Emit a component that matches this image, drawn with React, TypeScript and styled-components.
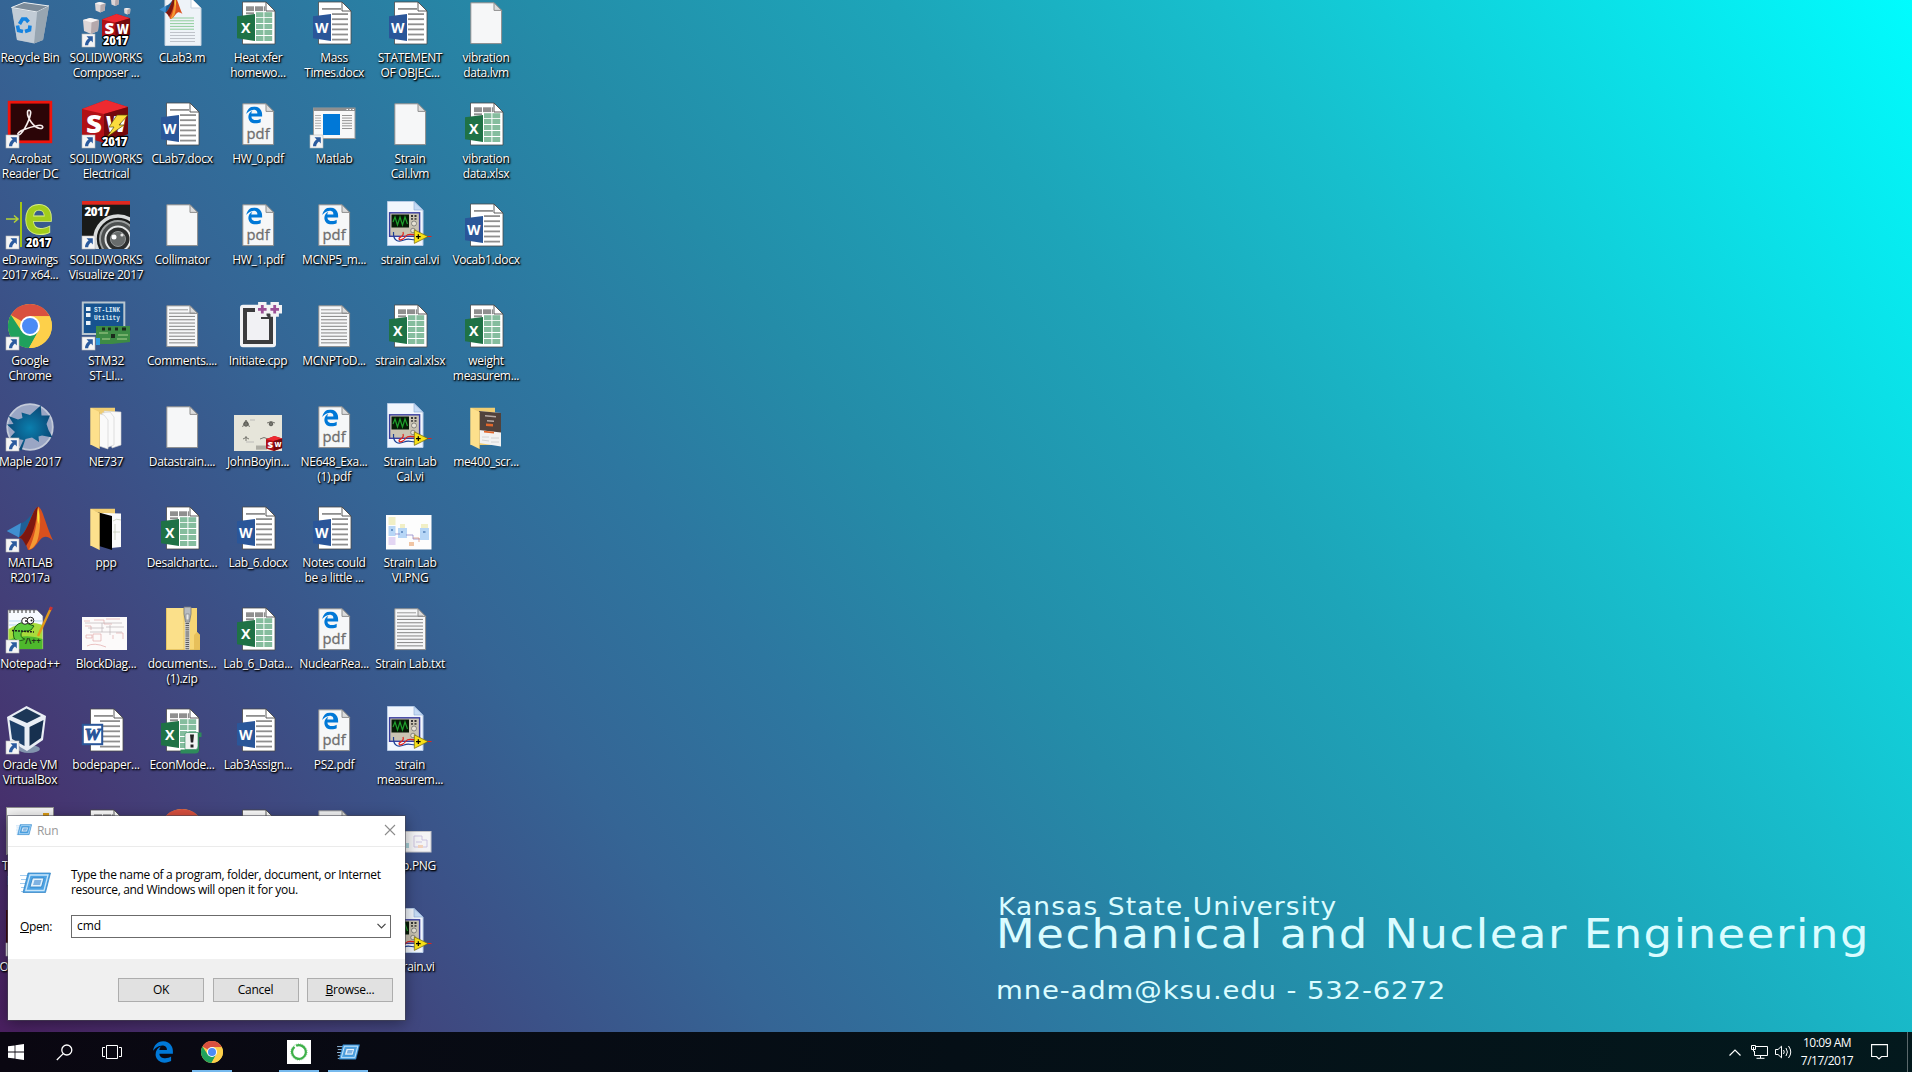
import React from "react";
import styled, { createGlobalStyle } from "styled-components";
import { FaEdgeLegacy } from "react-icons/fa";

const GlobalStyle = createGlobalStyle`
  html, body { margin: 0; padding: 0; overflow: hidden; }
  * { box-sizing: border-box; }
`;

const ui = `"Open Sans", "Noto Sans", sans-serif`;

const Screen = styled.div`
  width: 1912px;
  height: 1072px;
  display: flex;
  flex-direction: column;
  overflow: hidden;
  font-family: ${ui};
  font-size: 12px;
`;

const Desktop = styled.main`
  position: relative;
  height: 1032px;
  overflow: hidden;
  background: linear-gradient(
    53.1deg,
    #4a2060 0%,
    #433f78 12.3%,
    #3b5288 20.7%,
    #356595 28.8%,
    #2d77a0 38.9%,
    #248ca8 48.5%,
    #1da5b9 62%,
    #17bfcd 74%,
    #0be0e7 88%,
    #00fcfe 100%
  );
`;

const IconColumns = styled.div`
  display: flex;
  margin: -1px 0 0 -8px;
`;

const IconColumn = styled.div`
  display: flex;
  flex-direction: column;
  width: 76px;
`;

const Shortcut = styled.div`
  height: 101px;
  display: flex;
  flex-direction: column;
  align-items: center;
  gap: 3px;
`;

const IconSvg = styled.svg`
  width: 48px;
  height: 48px;
  flex: none;
  overflow: visible;
`;

const Label = styled.div`
  display: flex;
  flex-direction: column;
  align-items: center;
`;

const LabelLine = styled.span`
  color: #fff;
  line-height: 15px;
  white-space: nowrap;
  letter-spacing: -0.32px;
  text-shadow: 1px 1px 2px #000, 0 1px 2px rgba(0, 0, 0, 0.8), 1px 1px 1px rgba(0, 0, 0, 0.6);
`;

/* ---------- icon drawings, all on a 48 x 48 grid ---------- */

const Arrow = () => (
  <g>
    <rect x="0" y="35" width="13" height="13" fill="#f5f5f5" stroke="#b9b9b9" strokeWidth=".6" />
    <path d="M4.5 37.3H10.8V43.4L9 41.6C7.2 43 6.4 44.3 6.2 46.3H3C3 43.3 4.3 41 6.6 39.4Z" fill="#2b5b9e" />
  </g>
);

const Year = ({ x = 21, y = 46 }: { x?: number; y?: number }) => (
  <text x={x} y={y} fontFamily="Open Sans" fontWeight="800" fontSize="11.5" textLength="25.5" fill="#fff" stroke="#000" strokeWidth="2.4" paintOrder="stroke" strokeLinejoin="round">2017</text>
);

const Page = () => (
  <g>
    <path d="M8.8 3.8H32L39.6 11.4V44.6H8.8Z" fill="#f6f7f8" stroke="#8e8e8e" />
    <path d="M32 3.8V11.4H39.6Z" fill="#dcdcdc" stroke="#8e8e8e" />
  </g>
);

const OfficePage = () => (
  <g>
    <path d="M8.5 3H32L41 12V45H8.5Z" fill="#fff" stroke="#4a4a4a" strokeWidth=".8" />
    <path d="M32 3V12H41Z" fill="#fff" stroke="#4a4a4a" strokeWidth=".9" />
  </g>
);

const Lines = ({ x, w, y, n, step, h, c }: { x: number; w: number; y: number; n: number; step: number; h: number; c: string }) => (
  <g fill={c}>
    {Array.from({ length: n }, (_, i) => (
      <rect key={i} x={x} y={y + i * step} width={w} height={h} />
    ))}
  </g>
);

const Word = () => (
  <g>
    <OfficePage />
    <rect x="12" y="9" width="19" height="1.8" fill="#8f8f8f" />
    <Lines x={22} w={16} y={14.2} n={6} step={5.1} h={1.8} c="#8f8f8f" />
    <path d="M3 17.3L21 15V42L3 39.2Z" fill="#2a5699" />
    <text x="5" y="34" fontFamily="Open Sans" fontWeight="700" fontSize="15" textLength="13.5" lengthAdjust="spacingAndGlyphs" fill="#fff">W</text>
  </g>
);

const OldWord = () => (
  <g>
    <OfficePage />
    <rect x="12" y="9" width="19" height="1.8" fill="#8f8f8f" />
    <Lines x={18} w={20} y={14.2} n={6} step={5.1} h={1.8} c="#8f8f8f" />
    <rect x=".8" y="18.8" width="19.4" height="19.4" fill="#fff" stroke="#2a5699" strokeWidth="2" />
    <text x="2.6" y="34" fontFamily="Liberation Serif" fontStyle="italic" fontWeight="700" fontSize="17" textLength="16" lengthAdjust="spacingAndGlyphs" fill="#2a5699" stroke="#2a5699">W</text>
  </g>
);

const Excel = () => (
  <g>
    <OfficePage />
    <g fill="#8f8f8f">
      <rect x="12" y="7.3" width="8" height="4.8" />
      <rect x="21" y="7.3" width="8" height="4.8" />
      <rect x="29.8" y="7.3" width="1.4" height="4.8" />
      <rect x="12" y="13.3" width="8" height="2" />
    </g>
    <g fill="#85bd9e">
      {[13.2, 19, 25, 31, 37].map((y) => (
        <g key={y}>
          <rect x="22" y={y} width="7.4" height="5" />
          <rect x="30.4" y={y} width="7.8" height="5" />
        </g>
      ))}
    </g>
    <path d="M3 17.3L21 15V42L3 39.2Z" fill="#1f7246" />
    <text x="7" y="34" fontFamily="Open Sans" fontWeight="700" fontSize="15" textLength="9.5" lengthAdjust="spacingAndGlyphs" fill="#fff">X</text>
  </g>
);

const ExcelMacro = () => (
  <g>
    <Excel />
    <path d="M29 26.500H43.500V31H41V44Q41 47.500 37 47.500H22.500V43.500H27Z" fill="#2e8b5b" />
    <path d="M27 28.500Q27 26.500 29 26.500H40V40Q40 43.500 37.500 43.500H27Z" fill="#f2f4f2" stroke="#2e8b5b" strokeWidth=".6" />
    <path d="M32 28.500H36L35.200 36.500H32.800ZM32.500 38.500H35.500V41.500H32.500Z" fill="#222" />
  </g>
);

const Pdf = () => (
  <g>
    <Page />
    <svg x="11.500" y="6.300" width="17.500" height="17.500" viewBox="0 0 20 20">
      <FaEdgeLegacy size={20} color="#0078d7" />
    </svg>
    <text x="12.600" y="38.500" fontFamily="Open Sans" fontSize="15" textLength="23" lengthAdjust="spacingAndGlyphs" fill="#6e6e6e" stroke="#6e6e6e" strokeWidth=".3">pdf</text>
  </g>
);

const TextDoc = () => (
  <g>
    <Page />
    <rect x="11" y="7.300" width="19" height="1" fill="#9b9b9b" />
    <Lines x={11} w={26} y={10.600} n={10} step={3.300} h={1.100} c="#8f8f8f" />
  </g>
);

const Vi = () => (
  <g>
    <path d="M1.500 .500H28L37 9V44.500H1.500Z" fill="#f1f6fd" stroke="#b7cbe6" />
    <path d="M28 .500V9H37Z" fill="#c5daf5" stroke="#89a9d2" strokeWidth=".6" />
    <rect x="3.600" y="11.800" width="30" height="23.500" fill="#c9c3b2" stroke="#3b3fa0" strokeWidth="1.400" />
    <rect x="5.500" y="13.500" width="17.500" height="13" fill="#061a06" />
    <path d="M7 21L9 16L11.500 24L14 16L16.500 24L19 16L21.500 23" fill="none" stroke="#1fa12c" strokeWidth="1.200" />
    <g fill="#333"><rect x="25" y="14" width="2" height="2" /><rect x="28.500" y="14" width="2" height="2" /><rect x="25" y="17.200" width="2" height="1.500" /><rect x="28.500" y="17.200" width="2" height="1.500" /></g>
    <circle cx="28" cy="22.500" r="2.500" fill="#e6e1d4" stroke="#666" strokeWidth=".7" />
    <circle cx="27" cy="29.500" r="2.300" fill="#e6e1d4" stroke="#666" strokeWidth=".7" />
    <path d="M7.500 31C7 41 13 41 18 39S25 39 29 39" fill="none" stroke="#1c3f94" strokeWidth="1.200" />
    <path d="M17 31C19 36 12 36 13 38S18 38 20 35S27 34 30 34M40 35.500H45.500" fill="none" stroke="#e2231a" strokeWidth="1.200" />
    <path d="M28.300 28.800L42 35.600L28.300 42.400Z" fill="#f7e017" stroke="#6e6410" strokeWidth=".7" />
    <path d="M30 35.600H34.600M32.300 33.300V37.900" stroke="#000" strokeWidth="1.200" />
  </g>
);

const Folder = ({ kind }: { kind: "papers" | "black" | "web" }) => (
  <g>
    <path d="M8.500 4.700H33V42H8.500Z" fill="#f0cd72" />
    {kind === "papers" && (
      <g fill="#fafafa" stroke="#cfcfcf" strokeWidth=".6">
        <path d="M22 8L39 9V42L30 45Z" />
        <path d="M20 10L28 9L32 14V42L24 45Z" />
        <path d="M14 10L22 12L26 17V46L17 43Z" />
      </g>
    )}
    {kind === "black" && (
      <g>
        <path d="M20 9L39 9.500V43L29 44Z" fill="#fafafa" />
        <path d="M31 17Q34 14 39 16M31 28H38M33 20V36" stroke="#c5ccb8" strokeWidth=".8" fill="none" />
        <path d="M11 7L30 12V46L17 42Z" fill="#000" />
      </g>
    )}
    {kind === "web" && (
      <g>
        <path d="M17 8L39 10V43.500L17 40Z" fill="#f2f2f2" />
        <path d="M17 8L39 10V29.500L17 27Z" fill="#51423c" />
        <path d="M23 12L34 13V14.500L23 13.500ZM25 17L32 17.500V19L25 18.500Z" fill="#b8aaa4" />
        <path d="M24 20.500L31 21V23.500L24 23ZM22 27.800L32 28.800V30.500L22 29.500Z" fill="#e2672b" />
        <path d="M20 34H27M29 35H37M20 37L27 38M29 39H37" stroke="#ccc" strokeWidth=".8" />
      </g>
    )}
    <path d="M8.500 4.700L17.500 9V46L8.500 41.500Z" fill="#fde08c" />
    <path d="M17.500 9V46" stroke="#d9b65c" strokeWidth=".6" />
  </g>
);

const ChromeMark = () => (
  <g>
    <circle cx="24" cy="24" r="22" fill="#fdd04a" />
    <path d="M24 24L4.900 13A22 22 0 0 1 43.100 13.300L43.600 14.300H24Z" fill="#d9503f" />
    <path d="M4.900 13A22 22 0 0 0 23 46L32.400 29L24 24L15.500 29Z" fill="#1fa15d" />
    <path d="M24 14.300H43.600A22 22 0 0 1 23 46L32.500 29Z" fill="#fdd04a" />
    <circle cx="24" cy="24" r="10" fill="#fff" />
    <circle cx="24" cy="24" r="8" fill="#4c8bf5" />
  </g>
);

const Matlab = () => (
  <g>
    <path d="M.700 27L15 19L22 24L13 33.500Z" fill="#3f8fd0" />
    <path d="M15 19C20 19 25 10 32 3C27 14 24 24 19 30L13 33.500Z" fill="#1e5f96" />
    <path d="M32 2.700C36 2 40 22 47 36.500C42 32 38 31 34 36C30 41 27 46 22 46C20 40 18 35 13 33.500C22 29 26 5 32 2.700Z" fill="#d9501e" />
    <path d="M32 2.700C30 18 28 30 20 42C18 37 16 34.500 13 33.500C22 29 26 5 32 2.700Z" fill="#7d1710" />
    <path d="M32 2.700C35 10 35 26 31 38C28 43 26 45 23 45.500C29 32 31 20 32 2.700Z" fill="#f59a33" />
    <path d="M32 4C33.500 9 33.500 14 32.500 20C31 16 31 9 32 4Z" fill="#fde23d" />
  </g>
);

const MatlabFile = () => (
  <g>
    <path d="M7 -1H33L43 9V46.500H7Z" fill="#eef3f8" stroke="#c7d3df" />
    <path d="M33 -1V9H43Z" fill="#fff" stroke="#c7d3df" />
    <Lines x={12} w={24} y={18.500} n={5} step={2.800} h={1} c="#8fce9c" />
    <Lines x={12} w={25} y={33} n={4} step={3} h={.900} c="#b9bec4" />
    <g transform="translate(1,-3) scale(.5)"><Matlab /></g>
  </g>
);

const RecycleBin = () => (
  <g>
    <path d="M5.500 8.500L18 3.500L43 7L37 41L28 44.500L11 41Z" fill="#b9c4ce" opacity=".9" />
    <path d="M5.500 8.500L31 13L43 7L18 3.500Z" fill="#7c8b99" stroke="#e8edf1" strokeWidth="1" />
    <path d="M31 13L43 7L37 41L28 44.500Z" fill="#97a5b1" />
    <path d="M6 9.500L31 13.500L28 44L11 41Z" fill="#c5cfd8" opacity=".85" />
    <g fill="none" stroke="#1583e0" strokeWidth="3.600">
      <path d="M13.500 25L16.500 20H20L22.500 23" />
      <path d="M11.500 26.500L12.500 31.500L17 32.500" />
      <path d="M19 32.500L23.500 31L24 26.500" />
    </g>
  </g>
);

const Cube = ({ s = 1, x = 0, y = 0 }: { s?: number; x?: number; y?: number }) => (
  <g transform={`translate(${x},${y}) scale(${s})`}>
    <path d="M0 9L24 0L46 7V34L22 43L0 36Z" fill="#b11116" />
    <path d="M0 9L24 0L46 7L22 14Z" fill="#ee2a30" />
    <path d="M22 14L46 7V34L22 43Z" fill="#74090d" />
    <text x="4" y="33" fontFamily="Open Sans" fontWeight="800" fontSize="25" textLength="16" lengthAdjust="spacingAndGlyphs" fill="#fff">S</text>
    <text x="24" y="32" fontFamily="Open Sans" fontWeight="800" fontSize="22" textLength="20" lengthAdjust="spacingAndGlyphs" fill="#fff">W</text>
  </g>
);

const WhiteCube = ({ x, y, s }: { x: number; y: number; s: number }) => (
  <g transform={`translate(${x},${y}) scale(${s})`}>
    <path d="M0 2L7 0L16 2L15 13L8 16L1 13Z" fill="#dcd5d6" />
    <path d="M0 2L7 0L16 2L8.500 4.500Z" fill="#f7f4f4" />
    <path d="M8.500 4.500L16 2L15 13L8 16Z" fill="#b5a9ac" />
  </g>
);

const Composer = () => (
  <g>
    <WhiteCube x={1} y={19} s={1} />
    <WhiteCube x={13} y={3} s={.65} />
    <WhiteCube x={29} y={-1} s={.5} />
    <WhiteCube x={42} y={9} s={.4} />
    <Cube x={20} y={15} s={.61} />
    <Year /><Arrow />
  </g>
);

const Electrical = () => (
  <g>
    <Cube />
    <path d="M35 15H46L37 25H42L25 37L32 27H27Z" fill="#fbdc3c" stroke="#5c4a05" strokeWidth=".7" />
    <Year x={20} /><Arrow />
  </g>
);

const Visualize = () => (
  <g>
    <rect width="48" height="48" fill="#191b1a" />
    <rect width="48" height="3.700" fill="#e0281f" />
    <clipPath id="lens"><rect y="4" width="48" height="44" /></clipPath>
    <g clipPath="url(#lens)">
      <circle cx="36" cy="38" r="23" fill="none" stroke="#d9dcdc" strokeWidth="3.500" />
      <circle cx="36" cy="38" r="18" fill="#4d5050" stroke="#9da0a0" strokeWidth="2" />
      <circle cx="36" cy="38" r="12.500" fill="#2c2e2e" stroke="#e6e8e8" strokeWidth="2" />
      <circle cx="36" cy="38" r="7.500" fill="#686c6c" stroke="#929696" />
      <circle cx="32" cy="36" r="2.500" fill="#fff" /><circle cx="40" cy="34" r="1.600" fill="#e8e8e8" />
    </g>
    <text x="2.500" y="14.500" fontFamily="Open Sans" fontWeight="800" fontSize="11.500" textLength="25.500" fill="#fff">2017</text>
    <Arrow />
  </g>
);

const Acrobat = () => (
  <g>
    <rect x="3.200" y="2.200" width="41.600" height="39.600" fill="#2b0507" stroke="#f0140c" strokeWidth="2.800" />
    <path d="M12 34.500C10 32 22 27.500 32 25.500C38 24.500 38 29 34 28.500C28 28 21 18 21.500 12C22 9 25.500 10 24.500 14C23 22 15 37 12 34.500Z" fill="none" stroke="#f6eeee" strokeWidth="1.600" />
    <Arrow />
  </g>
);

const EDrawings = () => (
  <g>
    <rect x="14" y="1" width="2" height="45" fill="#a4c614" />
    <path d="M0 18H11M8 14.500L12 18L8 21.500" stroke="#b5d334" strokeWidth="1.500" fill="none" />
    <text x="17.500" y="32.500" fontFamily="Open Sans" fontWeight="700" fontSize="53" textLength="30" lengthAdjust="spacingAndGlyphs" fill="#a2cd1c" stroke="#d9ef86" strokeWidth=".800">e</text>
    <Year x={20} /><Arrow />
  </g>
);

const Chrome = () => (<g><ChromeMark /><Arrow /></g>);
const MatlabApp = () => (<g><Matlab /><Arrow /></g>);

const Maple = () => (
  <g>
    <radialGradient id="leaf"><stop offset="0" stopColor="#0b7fae" /><stop offset="1" stopColor="#0a4a78" /></radialGradient>
    <circle cx="24" cy="24" r="22.800" fill="#9aa6c4" stroke="#c3cad9" strokeWidth="1.800" />
    <path d="M34.700 2.500L35.500 12.500L44 12.500L40.500 21L42.500 27L46.500 34.500L36 32.500L32.500 33.500L33 39L26 34.500L19.500 36L15.500 47.500L13 46.500L17.500 37L4 34.500L9 29L1 21.500L7.500 21L2.500 13L12 16.500L16.500 15L15.500 9.500L24 12Z" fill="url(#leaf)" />
    <Arrow />
  </g>
);

const NotepadPP = () => (
  <g>
    <path d="M2 5H31L37 11V44H2Z" fill="#f7fbff" stroke="#6d6d6d" strokeWidth=".7" />
    <path d="M4 5V8M8 5V8M12 5V8M16 5V8M20 5V8M24 5V8M28 5V8" stroke="#333" />
    <path d="M3 16H36M3 20H36" stroke="#9cc7ea" strokeWidth=".7" />
    <path d="M2.500 24Q20 14 36.500 20V44H2.500Z" fill="#a8dc3c" />
    <path d="M2.500 35Q20 28 36.500 34V44H2.500Z" fill="#4eb82c" />
    <path d="M8 33C5 22 13 16 20 18L28 21L25 25C19 27 15 25 15 30S22 33 17 35Q11 37 8 33Z" fill="#5ecb3d" stroke="#174f10" strokeWidth=".900" />
    <circle cx="19" cy="16" r="3.300" fill="#fff" stroke="#222" /><circle cx="24.500" cy="15.500" r="3.300" fill="#fff" stroke="#222" />
    <circle cx="20" cy="16" r="1" fill="#222" /><circle cx="25.500" cy="15.500" r="1" fill="#222" />
    <path d="M6 25.500L28 27" stroke="#1c1c1c" strokeWidth="1.500" strokeDasharray="2 1" />
    <text x="19" y="39" fontFamily="Open Sans" fontSize="8" fontWeight="700" fill="#24331b">/\++</text>
    <path d="M45 3L32 31" stroke="#e39a1a" strokeWidth="2.400" /><path d="M45.500 2L44.300 5" stroke="#c33" strokeWidth="3" />
    <Arrow />
  </g>
);

const VirtualBox = () => (
  <g>
    <ellipse cx="23" cy="43" rx="11" ry="4" fill="#8294ad" />
    <path d="M1 11L20.500 0L40 10L37 34L21 45L4 35Z" fill="#e9eef5" />
    <path d="M20.500 2.500L35 10L21 17L6 10.500Z" fill="#1c3757" />
    <path d="M3.500 14L18.500 21V40L6 33Z" fill="#1d3f68" />
    <path d="M37.500 14L23.500 21V40L35 32Z" fill="#17304f" />
    <Arrow />
  </g>
);

const Stm32 = () => (
  <g>
    <rect x=".800" y=".500" width="41.500" height="31.500" fill="#17538f" stroke="#b9c6cf" strokeWidth="2" />
    <rect x="4" y="5" width="4.500" height="4" fill="#e9f2f8" /><rect x="4" y="11" width="4.500" height="4" fill="#e9f2f8" /><rect x="4" y="19" width="4.500" height="4" fill="#e9f2f8" />
    <text x="12" y="10" fontFamily="Liberation Mono" fontWeight="700" fontSize="6.500" textLength="26" lengthAdjust="spacingAndGlyphs" fill="#dceaf5">ST-LINK</text>
    <text x="12" y="18" fontFamily="Liberation Mono" fontWeight="700" fontSize="7" textLength="26" lengthAdjust="spacingAndGlyphs" fill="#dceaf5">Utility</text>
    <path d="M14 24H48V40L30 42H14Z" fill="#3d8b45" />
    <path d="M20 25.500h3v3h-3zM26 25.500h3v3h-3zM33 25.500h3v3h-3zM40 25.500h4v3h-4zM29 32h4v4h-4z" fill="#1b2a1c" />
    <path d="M17 31H26M36 33H46M20 37H28M35 37H45" stroke="#a9d18e" strokeWidth="1.200" />
    <rect x="14" y="36" width="4" height="7" fill="#2f9be0" />
    <Arrow />
  </g>
);

const WindowApp = () => (
  <g>
    <rect x="3.500" y="8" width="41.500" height="30.500" fill="#f8f8f8" stroke="#9a9a9a" />
    <rect x="3.500" y="8" width="41.500" height="3" fill="#8f8f8f" />
    <path d="M36.500 9.500H38M39.500 9.500H41M42.500 9.500H44" stroke="#fff" />
    <rect x="13" y="14" width="17" height="21" fill="#0078d7" />
    <Lines x={5} w={6} y={15} n={6} step={2.600} h={.900} c="#a5a5a5" />
    <Lines x={32} w={10} y={15} n={6} step={2.600} h={.900} c="#8a8a8a" />
    <Arrow />
  </g>
);

const Cpp = () => (
  <g>
    <rect x="6" y="2.700" width="36" height="42.500" rx="3" fill="#f2f2f4" />
    <path d="M11 8H29L37 15V40H11Z" fill="#f1f1f4" stroke="#3c3c3e" strokeWidth="4" />
    <path d="M27 15H37V17L27 17Z" fill="#3c3c3e" />
    <path d="M21 7.300H48M28.300 0V14.700M40.700 0V14.700" stroke="#f2f2f4" strokeWidth="8.400" />
    <path d="M24 7.300H32.600M28.300 3V11.600M36.400 7.300H45M40.700 3V11.600" stroke="#9b4f96" strokeWidth="2.800" />
  </g>
);

const John = () => (
  <g>
    <rect y="12" width="48" height="36" fill="#e6e5da" />
    <g stroke="#5c5c56" strokeWidth="1" fill="#77776f">
      <circle cx="12" cy="21" r="2.200" /><path d="M8.500 24L12 17L15.500 24M33 20Q37 17 41 20M9 36Q12 33 15 36M12 33V38M26 36Q30 33 34 36" fill="none" strokeWidth=".8" /><circle cx="37" cy="21" r="1.800" />
    </g>
    <path d="M16 17H21M12 39H20M22 44H33M22 46H33" stroke="#aaa" strokeWidth=".7" />
    <rect x="22" y="42.500" width="11" height="4" fill="#aeada4" />
    <Cube x={32} y={33} s={.35} />
  </g>
);

const StrainPng = () => (
  <g>
    <rect y="11" width="45.500" height="34.500" fill="#fdfdfd" />
    <g fill="#f1efc6"><rect x="2.500" y="13" width="7" height="8" /><rect x="14" y="20" width="5" height="4" /><rect x="35" y="20" width="7" height="4" /></g>
    <g fill="#b7d6f6"><rect x="2.500" y="22" width="7" height="10" /><rect x="12" y="24" width="9" height="10" /><rect x="34" y="24" width="9" height="12" /></g>
    <rect x="2.500" y="33" width="7" height="8" fill="#e3d6f3" />
    <path d="M9 30H14M20 31H27V35H34" stroke="#8f85c8" fill="none" strokeWidth=".8" />
    <path d="M27 34H33V38" stroke="#d88b6d" fill="none" strokeWidth=".7" /><rect x="23" y="38" width="5" height="4" fill="#f0c5a4" />
    <g fill="#6d97c9"><rect x="5" y="25" width="2" height="2" /><rect x="15" y="27" width="2" height="2" /><rect x="37" y="27" width="2.500" height="2" /></g>
  </g>
);

const BlockPng = () => (
  <g>
    <rect y="12" width="45" height="33" fill="#fcfafa" />
    <g fill="none" strokeWidth=".7">
      <path d="M2 16H8M12 15H22V19H30M24 14H38M3 21H9V25M4 30H10V33H4ZM11 29H19V36H11ZM34 28H41V34M5 41Q12 37 24 42M31 30V34" stroke="#e2a9a9" />
      <path d="M3 18H40M6 23H22M24 22H42M8 27H40M20 18V27M28 20V30" stroke="#bdb5b8" />
    </g>
  </g>
);

const SmallPng = () => (
  <g>
    <rect y="24.500" width="45" height="20.500" fill="#f4f4f6" stroke="#c5c5c9" />
    <path d="M28 29H36V33H41V40H28ZM30 35H36" stroke="#c3b9dd" fill="none" strokeWidth=".8" />
    <rect x="32" y="38" width="5" height="3" fill="#f3d3bb" />
    <rect x="20" y="36" width="3" height="5" fill="#a7d0d8" />
  </g>
);

const Zip = () => (
  <g>
    <path d="M8 3H39V27L42 30V45H8Z" fill="#f6d675" />
    <path d="M8 3H25V45H8Z" fill="#fbe08a" />
    <path d="M39 27L42 30V45H36V30Z" fill="#e7c05a" />
    <path d="M8.500 3V45M8 44.500H42" stroke="#dcb956" strokeWidth=".7" />
    <rect x="26.800" y="15" width="5" height="30" fill="#cfcfcf" />
    <path d="M29.300 18V45" stroke="#5a5a5a" strokeWidth="3.500" strokeDasharray="1 1.100" />
    <path d="M26 2H33V9L31.500 17H27.500L26 9Z" fill="#b9bcc0" stroke="#74777b" strokeWidth=".8" />
    <rect x="28" y="9" width="3" height="6" fill="#e9e9e9" stroke="#74777b" strokeWidth=".6" />
  </g>
);

const FormApp = () => (
  <g>
    <rect x=".500" y=".500" width="47" height="47" fill="#f4f4f4" stroke="#8e8e8e" />
    <rect x="37" y="6" width="6" height="6" fill="#dd9c14" />
  </g>
);
const DarkApp = () => <g><rect y="2" width="44" height="44" fill="#3d0a10" /><Arrow /></g>;

type Item = { icon: React.ReactNode; lines: string[] };
const it = (icon: React.ReactNode, ...lines: string[]): Item => ({ icon, lines });

const columns: Item[][] = [
  [
    it(<RecycleBin />, "Recycle Bin"),
    it(<Acrobat />, "Acrobat", "Reader DC"),
    it(<EDrawings />, "eDrawings", "2017 x64..."),
    it(<Chrome />, "Google", "Chrome"),
    it(<Maple />, "Maple 2017"),
    it(<MatlabApp />, "MATLAB", "R2017a"),
    it(<NotepadPP />, "Notepad++"),
    it(<VirtualBox />, "Oracle VM", "VirtualBox"),
    it(<FormApp />, "TI Connect", "Program"),
    it(<DarkApp />, "Origin 2017"),
  ],
  [
    it(<Composer />, "SOLIDWORKS", "Composer ..."),
    it(<Electrical />, "SOLIDWORKS", "Electrical"),
    it(<Visualize />, "SOLIDWORKS", "Visualize 2017"),
    it(<Stm32 />, "STM32", "ST-LI..."),
    it(<Folder kind="papers" />, "NE737"),
    it(<Folder kind="black" />, "ppp"),
    it(<BlockPng />, "BlockDiag..."),
    it(<OldWord />, "bodepaper..."),
    it(<Excel />),
  ],
  [
    it(<MatlabFile />, "CLab3.m"),
    it(<Word />, "CLab7.docx"),
    it(<Page />, "Collimator"),
    it(<TextDoc />, "Comments...."),
    it(<Page />, "Datastrain...."),
    it(<Excel />, "Desalchartc..."),
    it(<Zip />, "documents...", "(1).zip"),
    it(<ExcelMacro />, "EconMode..."),
    it(<ChromeMark />),
  ],
  [
    it(<Excel />, "Heat xfer", "homewo..."),
    it(<Pdf />, "HW_0.pdf"),
    it(<Pdf />, "HW_1.pdf"),
    it(<Cpp />, "Initiate.cpp"),
    it(<John />, "JohnBoyin..."),
    it(<Word />, "Lab_6.docx"),
    it(<Excel />, "Lab_6_Data..."),
    it(<Word />, "Lab3Assign..."),
    it(<OfficePage />),
  ],
  [
    it(<Word />, "Mass", "Times.docx"),
    it(<WindowApp />, "Matlab"),
    it(<Pdf />, "MCNP5_m..."),
    it(<TextDoc />, "MCNPToD..."),
    it(<Pdf />, "NE648_Exa...", "(1).pdf"),
    it(<Word />, "Notes could", "be a little ..."),
    it(<Pdf />, "NuclearRea..."),
    it(<Pdf />, "PS2.pdf"),
    it(<Page />),
  ],
  [
    it(<Word />, "STATEMENT", "OF OBJEC..."),
    it(<Page />, "Strain", "Cal.lvm"),
    it(<Vi />, "strain cal.vi"),
    it(<Excel />, "strain cal.xlsx"),
    it(<Vi />, "Strain Lab", "Cal.vi"),
    it(<StrainPng />, "Strain Lab", "VI.PNG"),
    it(<TextDoc />, "Strain Lab.txt"),
    it(<Vi />, "strain", "measurem..."),
    it(<SmallPng />, "Amp.PNG"),
    it(<Vi />, "VStrain.vi"),
  ],
  [
    it(<Page />, "vibration", "data.lvm"),
    it(<Excel />, "vibration", "data.xlsx"),
    it(<Word />, "Vocab1.docx"),
    it(<Excel />, "weight", "measurem..."),
    it(<Folder kind="web" />, "me400_scr..."),
  ],
];

/* ---------- wallpaper lettering ---------- */

const Lettering = styled.div`
  position: absolute;
  left: 996px;
  top: 889px;
  color: #dafcff;
  font-family: "DejaVu Sans", Verdana, sans-serif;
  display: flex;
  flex-direction: column;
  align-items: flex-start;
`;

const LetterLine = styled.div<{ $size: number; $height: number; $stretch: number; $indent?: number; $spacing?: number }>`
  font-size: ${(p) => p.$size}px;
  height: ${(p) => p.$height}px;
  line-height: ${(p) => p.$height}px;
  margin-left: ${(p) => p.$indent ?? 0}px;
  letter-spacing: ${(p) => p.$spacing ?? 0}px;
  white-space: nowrap;
  transform: scaleX(${(p) => p.$stretch});
  transform-origin: left center;
`;

/* ---------- run dialog ---------- */

const Dialog = styled.section`
  position: absolute;
  left: 8px;
  top: 816px;
  width: 397px;
  height: 204px;
  display: flex;
  flex-direction: column;
  background: #fff;
  color: #000;
  box-shadow: 0 0 0 1px rgba(70, 70, 80, 0.55), 0 3px 14px rgba(0, 0, 0, 0.4);
`;

const TitleBar = styled.header`
  height: 31px;
  display: flex;
  align-items: center;
  gap: 5px;
  padding: 0 9px 2px 8px;
  border-bottom: 1px solid #ebebeb;
  color: #999;
`;

const TitleText = styled.span`
  flex: 1;
  letter-spacing: -0.3px;
`;

const DialogBody = styled.div`
  flex: 1;
  padding: 19px 14px 0 12px;
`;

const Prompt = styled.div`
  display: flex;
  gap: 18px;
  line-height: 15px;
`;

const PromptIcon = styled.div`
  flex: none;
  width: 33px;
  padding-top: 6px;
`;

const PromptText = styled.div`
  margin-top: 1px;
  white-space: nowrap;
  letter-spacing: -0.33px;
`;

const Field = styled.div`
  display: flex;
  align-items: center;
  margin-top: 17px;
`;

const FieldLabel = styled.label`
  width: 51px;
  letter-spacing: -0.4px;
`;

const Combo = styled.div`
  width: 320px;
  height: 23px;
  display: flex;
  align-items: center;
  justify-content: space-between;
  border: 1px solid #6b6b6b;
  padding: 0 4px 2px 5px;
`;

const DialogFooter = styled.footer`
  height: 61px;
  background: #f0f0f0;
  display: flex;
  gap: 8.5px;
  padding: 19px 0 0 110px;
`;

const Button = styled.button`
  width: 86px;
  height: 24px;
  padding: 0 0 1px;
  border: 1px solid #adadad;
  background: #e1e1e1;
  color: #000;
  font: 12px ${ui};
  letter-spacing: -0.25px;
`;

const RunMark = ({ w, h }: { w: number; h: number }) => (
  <svg width={w} height={h} viewBox="0 0 31 23">
    <path d="M0 3.500H9M1 7.500H8M0 11.500H7M1 15.500H6M1 19.500H5" stroke="#a3cdf0" strokeWidth="1.200" />
    <path d="M8 1H30.500L25.500 20.500H3Z" fill="#4da3e4" stroke="#2f7fc0" strokeWidth=".7" />
    <path d="M10 3H28L24 18.500H5.800Z" fill="none" stroke="#c9e6fa" strokeWidth="1.300" />
    <path d="M12.500 6H24L21.500 15H10Z" fill="#e4f2fc" stroke="#2f7fc0" strokeWidth=".8" />
    <path d="M14.500 8H21.500L20 13H13Z" fill="#7fb2e2" />
  </svg>
);

/* ---------- taskbar ---------- */

const Taskbar = styled.nav`
  height: 40px;
  display: flex;
  justify-content: space-between;
  background: linear-gradient(90deg, #0a0711, #050f16 50%, #03191d);
  color: #fff;
`;

const TaskGroup = styled.div`
  display: flex;
`;

const Task = styled.div<{ $w: number; $open?: boolean; $gap?: number }>`
  width: ${(p) => p.$w}px;
  height: 40px;
  margin-left: ${(p) => p.$gap ?? 0}px;
  display: flex;
  align-items: center;
  justify-content: center;
  border-bottom: 2px solid ${(p) => (p.$open ? "#76b9ed" : "transparent")};
  padding-top: 2px;
`;

const Tile = styled.div`
  width: 24px;
  height: 24px;
  background: #fff;
  display: grid;
  place-items: center;
`;

const Tray = styled.div`
  display: flex;
  align-items: center;
`;

const TrayItem = styled.div<{ $w: number }>`
  width: ${(p) => p.$w}px;
  display: flex;
  justify-content: center;
`;

const Clock = styled.div`
  width: 64px;
  display: flex;
  flex-direction: column;
  align-items: center;
  line-height: 18px;
  letter-spacing: -0.5px;
  white-space: nowrap;
`;

const ShowDesktop = styled.div`
  width: 5px;
  height: 40px;
  border-left: 1px solid #5b696c;
`;

export default function App() {
  return (
    <Screen>
      <GlobalStyle />
      <Desktop>
        <IconColumns>
          {columns.map((col, c) => (
            <IconColumn key={c}>
              {col.map((item, r) => (
                <Shortcut key={r}>
                  <IconSvg viewBox="0 0 48 48">{item.icon}</IconSvg>
                  <Label>
                    {item.lines.map((l) => (
                      <LabelLine key={l}>{l}</LabelLine>
                    ))}
                  </Label>
                </Shortcut>
              ))}
            </IconColumn>
          ))}
        </IconColumns>

        <Lettering>
          <LetterLine $size={24.500} $height={35} $stretch={1.08} $indent={2} $spacing={1.02}>Kansas State University</LetterLine>
          <LetterLine $size={41.500} $height={20} $stretch={1.08} $spacing={1.45}>Mechanical and Nuclear Engineering</LetterLine>
          <LetterLine $size={25.500} $height={92} $stretch={1.08} $spacing={.78}>mne-adm@ksu.edu - 532-6272</LetterLine>
        </Lettering>

        <Dialog>
          <TitleBar>
            <RunMark w={16} h={12} />
            <TitleText>Run</TitleText>
            <svg width="12" height="12" viewBox="0 0 12 12"><path d="M1 1L11 11M11 1L1 11" stroke="#8c8c8c" strokeWidth="1.100" /></svg>
          </TitleBar>
          <DialogBody>
            <Prompt>
              <PromptIcon><RunMark w={31} h={23} /></PromptIcon>
              <PromptText>
                Type the name of a program, folder, document, or Internet<br />
                resource, and Windows will open it for you.
              </PromptText>
            </Prompt>
            <Field>
              <FieldLabel><u>O</u>pen:</FieldLabel>
              <Combo>
                cmd
                <svg width="9" height="6" viewBox="0 0 9 6"><path d="M.500 .800L4.500 4.800L8.500 .800" fill="none" stroke="#444" strokeWidth="1.200" /></svg>
              </Combo>
            </Field>
          </DialogBody>
          <DialogFooter>
            <Button>OK</Button>
            <Button>Cancel</Button>
            <Button><u>B</u>rowse...</Button>
          </DialogFooter>
        </Dialog>
      </Desktop>

      <Taskbar>
        <TaskGroup>
          <Task $w={32}>
            <svg width="16" height="16" viewBox="0 0 16 16" fill="#fff"><path d="M0 2.300L6.600 1.400V7.600H0ZM7.400 1.300L16 0V7.600H7.400ZM0 8.400H6.600V14.600L0 13.700ZM7.400 8.400H16V16L7.400 14.700Z" /></svg>
          </Task>
          <Task $w={64}>
            <svg width="17" height="17" viewBox="0 0 17 17" fill="none" stroke="#fff" strokeWidth="1.300"><circle cx="10.800" cy="6" r="5" /><path d="M7.200 9.600L.800 16" /></svg>
          </Task>
          <Task $w={32}>
            <svg width="20" height="14" viewBox="0 0 20 14" fill="none" stroke="#fff" strokeWidth="1"><path d="M4.500 .500H15.500V13.500H4.500ZM3 2.500H.500V11.500H3M17 2.500H19.500V11.500H17" /></svg>
          </Task>
          <Task $w={40} $gap={15}><FaEdgeLegacy size={22} color="#0078d7" /></Task>
          <Task $w={40} $open $gap={9}>
            <svg width="22" height="22" viewBox="2 2 44 44"><ChromeMark /></svg>
          </Task>
          <Task $w={40} $open $gap={47}>
            <Tile>
              <svg width="18" height="18" viewBox="0 0 18 18" fill="none" stroke="#3eb049"><circle cx="9" cy="9" r="6.800" strokeWidth="2.200" strokeDasharray="40.500 2.200" transform="rotate(-115 9 9)" /><circle cx="9" cy="9" r="8.100" strokeWidth=".7" strokeDasharray="1 1.300" /></svg>
            </Tile>
          </Task>
          <Task $w={40} $open $gap={9}><RunMark w={23} h={17} /></Task>
        </TaskGroup>
        <Tray>
          <TrayItem $w={24}>
            <svg width="12" height="7" viewBox="0 0 12 7"><path d="M.500 6.500L6 1L11.500 6.500" fill="none" stroke="#fff" strokeWidth="1.200" /></svg>
          </TrayItem>
          <TrayItem $w={24}>
            <svg width="17" height="14" viewBox="0 0 17 14" fill="none" stroke="#fff"><path d="M5 1.500H16.500V10.500H3.500V6M9.500 10.500V13M5.500 13.300H13.500M.500 .500H4.500V4.500H.500ZM2.500 2V6.500" /></svg>
          </TrayItem>
          <TrayItem $w={24}>
            <svg width="17" height="14" viewBox="0 0 17 14" fill="none" stroke="#fff"><path d="M.500 4.500H3L6.500 1.200V12.800L3 9.500H.500ZM8.500 5Q10 7 8.500 9M11 3Q13.800 7 11 11M13.500 1Q18 7 13.500 13" /></svg>
          </TrayItem>
          <Clock><span>10:09 AM</span><span>7/17/2017</span></Clock>
          <TrayItem $w={40}>
            <svg width="17" height="17" viewBox="0 0 17 17"><path d="M.600 .600H16.400V12.500H10.500L8 15L5.500 12.500H.600Z" fill="none" stroke="#fff" strokeWidth="1.100" /></svg>
          </TrayItem>
          <TrayItem $w={8} />
          <ShowDesktop />
        </Tray>
      </Taskbar>
    </Screen>
  );
}
